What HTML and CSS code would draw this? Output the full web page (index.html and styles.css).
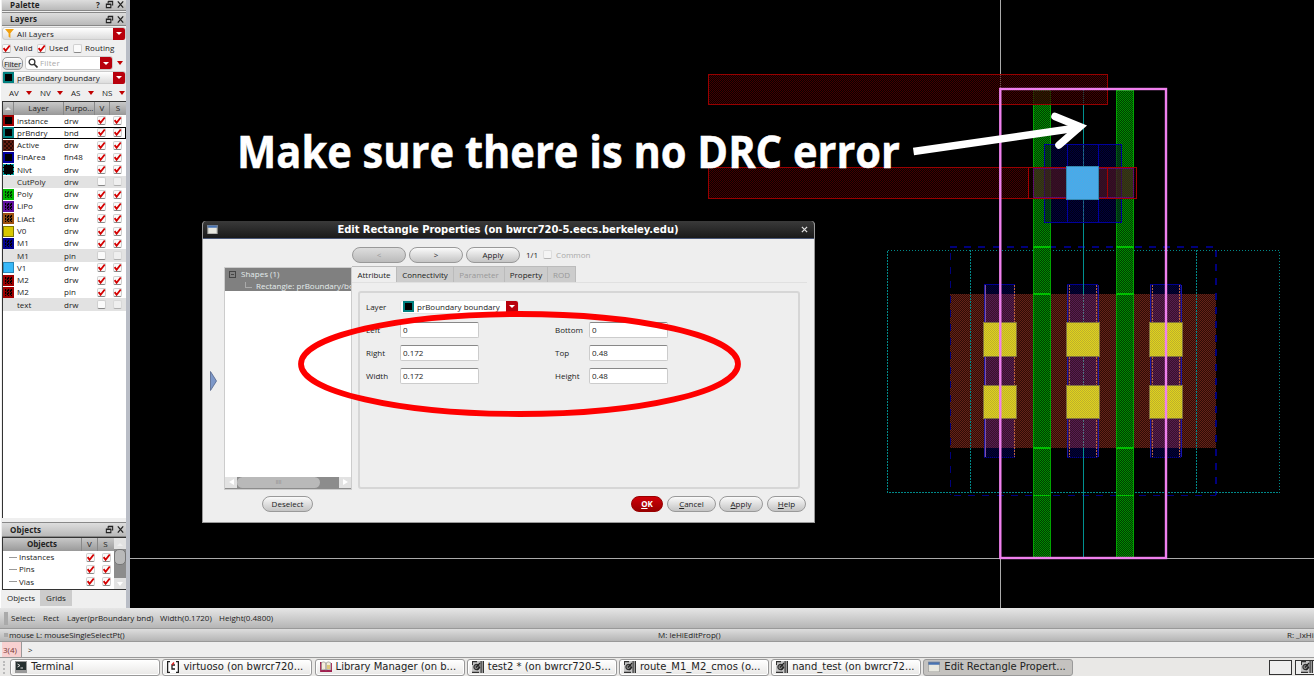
FILE: index.html
```html
<!DOCTYPE html>
<html lang="en">
<head>
<meta charset="utf-8">
<title>Layout Editor</title>
<link rel="stylesheet" href="styles.css">
</head>
<body>
<svg class="defs" width="0" height="0">
  <symbol id="tick" viewBox="0 0 10 10"><path d="M1.8 4.6 4 7.6 8.6 1.6" fill="none" stroke="#d40000" stroke-width="2"/></symbol>
  <symbol id="float" viewBox="0 0 10 10"><path d="M3.5 1.5h5v4h-1M3.5 1.5v2M3 2h6M1.5 4.5h5v4h-5zM1.5 5h5" fill="none" stroke="#222" stroke-width="1.2"/></symbol>
  <symbol id="close" viewBox="0 0 10 10"><path d="M2 1.5 8 8.5M8 1.5 2 8.5" fill="none" stroke="#222" stroke-width="1.4"/></symbol>
  <symbol id="win" viewBox="0 0 11 10"><path d="M0 0h11v10H0z" fill="#e8e8e0"/><path d="M0 0h11v3H0z" fill="#4773b3"/><path d="M.5.5h10v9H.5z" fill="none" stroke="#888" stroke-width=".6"/></symbol>
  <symbol id="chip" viewBox="0 0 12 12"><path d="M0 0h12v12H0z" fill="#c4c4c4"/><path d="M8.500 0h1.200v12H8.500zM10.700 0H12v12h-1.300zM0 10.800h7V12H0zM0 0h5v1.200H0zM0 0h1v4H0z" fill="#333"/><circle cx="4.500" cy="6" r="2.600" fill="#888" stroke="#333" stroke-width="1.200"/><path d="M4 6.500 8 2M5 9l3-3" stroke="#222" stroke-width="1.200"/></symbol>
</svg>
<div class="screen">
  <div class="main">
    <aside class="side">
      <div class="bar pal"><b>Palette</b><span class="q">?</span><svg class="bi"><use href="#float"/></svg><svg class="bi"><use href="#close"/></svg></div>
      <div class="bar lay"><b>Layers</b><svg class="bi"><use href="#float"/></svg><svg class="bi"><use href="#close"/></svg></div>
      <div class="combo all"><svg class="funnel" viewBox="0 0 10 10"><path d="M0 0h10L6 4.800V10L4 8.500V4.800z" fill="#f0a010"/></svg><span>All Layers</span><i class="drop"></i></div>
      <div class="checks"><i class="cb"><svg><use href="#tick"/></svg></i><span class="c1">Valid</span><i class="cb"><svg><use href="#tick"/></svg></i><span class="c2">Used</span><i class="cb"></i><span>Routing</span></div>
      <div class="filter"><span class="fbtn">Filter</span><div class="fin"><svg viewBox="0 0 10 10"><circle cx="4" cy="4" r="2.900" fill="none" stroke="#333" stroke-width="1.300"/><path d="M6 6 9.500 9.500" stroke="#333" stroke-width="1.700"/></svg><em>Filter</em><i class="drop"></i></div><i class="rtri"></i></div>
      <div class="combo cur"><i class="sw bnd"></i><span>prBoundary boundary</span><i class="drop"></i></div>
      <div class="vis"><span>AV</span><i class="rtri"></i><span>NV</span><i class="rtri"></i><span>AS</span><i class="rtri"></i><span>NS</span><i class="rtri"></i></div>
      <div class="table">
        <div class="thead"><i class="up"></i><span class="h1">Layer</span><span class="h2">Purpo...</span><span class="h3">V</span><span class="h4">S</span></div>
        <div class="row"><i class="sw inst"></i><span>instance</span><span>drw</span><i class="cb"><svg><use href="#tick"/></svg></i><i class="cb"><svg><use href="#tick"/></svg></i></div>
        <div class="row sel"><i class="sw bnd"></i><span>prBndry</span><span>bnd</span><i class="cb"><svg><use href="#tick"/></svg></i><i class="cb"><svg><use href="#tick"/></svg></i></div>
        <div class="row"><i class="sw act"></i><span>Active</span><span>drw</span><i class="cb"><svg><use href="#tick"/></svg></i><i class="cb"><svg><use href="#tick"/></svg></i></div>
        <div class="row"><i class="sw fin-a"></i><span>FinArea</span><span>fin48</span><i class="cb"><svg><use href="#tick"/></svg></i><i class="cb"><svg><use href="#tick"/></svg></i></div>
        <div class="row"><i class="sw nlvt"></i><span>Nlvt</span><span>drw</span><i class="cb"><svg><use href="#tick"/></svg></i><i class="cb"><svg><use href="#tick"/></svg></i></div>
        <div class="row off"><i class="sw none"></i><span>CutPoly</span><span>drw</span><i class="cb"></i><i class="cb dim"></i></div>
        <div class="row"><i class="sw poly"></i><span>Poly</span><span>drw</span><i class="cb"><svg><use href="#tick"/></svg></i><i class="cb"><svg><use href="#tick"/></svg></i></div>
        <div class="row"><i class="sw lipo"></i><span>LiPo</span><span>drw</span><i class="cb"><svg><use href="#tick"/></svg></i><i class="cb"><svg><use href="#tick"/></svg></i></div>
        <div class="row"><i class="sw liact"></i><span>LiAct</span><span>drw</span><i class="cb"><svg><use href="#tick"/></svg></i><i class="cb"><svg><use href="#tick"/></svg></i></div>
        <div class="row"><i class="sw v0"></i><span>V0</span><span>drw</span><i class="cb"><svg><use href="#tick"/></svg></i><i class="cb"><svg><use href="#tick"/></svg></i></div>
        <div class="row"><i class="sw m1"></i><span>M1</span><span>drw</span><i class="cb"><svg><use href="#tick"/></svg></i><i class="cb"><svg><use href="#tick"/></svg></i></div>
        <div class="row off"><i class="sw none"></i><span>M1</span><span>pin</span><i class="cb"></i><i class="cb dim"></i></div>
        <div class="row"><i class="sw v1"></i><span>V1</span><span>drw</span><i class="cb"><svg><use href="#tick"/></svg></i><i class="cb"><svg><use href="#tick"/></svg></i></div>
        <div class="row"><i class="sw m2"></i><span>M2</span><span>drw</span><i class="cb"><svg><use href="#tick"/></svg></i><i class="cb"><svg><use href="#tick"/></svg></i></div>
        <div class="row"><i class="sw m2"></i><span>M2</span><span>pin</span><i class="cb"><svg><use href="#tick"/></svg></i><i class="cb"><svg><use href="#tick"/></svg></i></div>
        <div class="row off"><i class="sw none"></i><span>text</span><span>drw</span><i class="cb"></i><i class="cb dim"></i></div>
      </div>
      <div class="bar obj"><b>Objects</b><svg class="bi"><use href="#float"/></svg><svg class="bi"><use href="#close"/></svg></div>
      <div class="objs">
        <div class="olist">
          <div class="ohead"><b>Objects</b><span>V</span><span>S</span></div>
          <div class="orow"><i class="br"></i><span>Instances</span><i class="cb"><svg><use href="#tick"/></svg></i><i class="cb"><svg><use href="#tick"/></svg></i></div>
          <div class="orow"><i class="br"></i><span>Pins</span><i class="cb"><svg><use href="#tick"/></svg></i><i class="cb"><svg><use href="#tick"/></svg></i></div>
          <div class="orow"><i class="br"></i><span>Vias</span><i class="cb"><svg><use href="#tick"/></svg></i><i class="cb"><svg><use href="#tick"/></svg></i></div>
        </div>
        <div class="vs"><i class="ar aup"></i><i class="trk"></i><i class="ar adn"></i></div>
      </div>
      <div class="stabs"><span class="on">Objects</span><span>Grids</span></div>
    </aside>
    <div class="canvas">
      <svg class="art" viewBox="130 0 1184 608" width="1184" height="608" shape-rendering="crispEdges">
        <defs>
          <pattern id="pr" width="2" height="2" patternUnits="userSpaceOnUse"><path d="M0 0h2v2H0z" fill="#140000" fill-opacity=".5"/><path d="M0 0h1v1H0zM1 1h1v1H1z" fill="#480000" fill-opacity=".9"/></pattern>
          <pattern id="pg" width="2" height="2" patternUnits="userSpaceOnUse"><path d="M0 0h2v2H0z" fill="#003c00"/><path d="M0 0h1v1H0zM1 1h1v1H1z" fill="#008c00"/></pattern>
          <pattern id="pa" width="2" height="2" patternUnits="userSpaceOnUse"><path d="M0 0h2v2H0z" fill="#300b06"/><path d="M0 0h1v1H0zM1 1h1v1H1z" fill="#642318"/></pattern>
          <pattern id="pb" width="2" height="2" patternUnits="userSpaceOnUse"><path d="M0 0h1v1H0zM1 1h1v1H1z" fill="#00003c"/></pattern>
          <pattern id="pp" width="2" height="2" patternUnits="userSpaceOnUse"><path d="M0 0h2v2H0z" fill="#38122a"/><path d="M0 0h1v1H0zM1 1h1v1H1z" fill="#561c50"/></pattern>
          <pattern id="py" width="2" height="2" patternUnits="userSpaceOnUse"><path d="M0 0h2v2H0z" fill="#e0d41c"/><path d="M0 0h1v1H0zM1 1h1v1H1z" fill="#bcae2c"/></pattern>
          <pattern id="pv" width="2" height="2" patternUnits="userSpaceOnUse"><path d="M0 0h2v2H0z" fill="#3cb0f0"/><path d="M0 0h1v1H0zM1 1h1v1H1z" fill="#58a4e0"/></pattern>
        </defs>
        <path d="M1000.500 0V608M130 558.500H1314" stroke="#aaa" fill="none"/>
        <rect x="950" y="294" width="266" height="154" fill="url(#pa)"/>
        <g stroke="#00007c" stroke-width="1.500" stroke-dasharray="7 7.200" fill="none"><path d="M950 247H1216M954 495.500H1216M950.500 253V495M1216 250V495"/></g>
        <g stroke="#008888" fill="none" stroke-dasharray="1.500 1.500"><path d="M887.500 250.500H1279.500V492.500H887.500zM970.500 250V492M1196.500 250V492"/></g>
        <g fill="#00001c" stroke="#000090"><rect x="984.500" y="284.500" width="30" height="173"/><rect x="1067.500" y="284.500" width="30" height="173"/><rect x="1150.500" y="284.500" width="30" height="173"/></g>
        <g fill="url(#pb)"><path d="M985 285h30v173h-30zM1068 285h30v173h-30zM1151 285h30v173h-30z"/></g>
        <g fill="url(#pp)"><path d="M985 294h30v154h-30zM1068 294h30v154h-30zM1151 294h30v154h-30z"/></g>
        <path d="M1014.500 285V457M1069.500 285V457M1096.500 285V457M1152.500 285V457M1179.500 285V457" stroke="#bc633e" stroke-dasharray="2 1"/>
        <path d="M985.500 285V457" stroke="#8050a0"/>
        <path d="M984.500 285V457M1067.500 285V457M1098.500 285V457M1150.500 285V457M1181.500 285V457" stroke="#1c18a4"/>
        <path d="M1083.500 90V294M1083.500 448V558" stroke="#009090"/>
        <path d="M1083.500 294V448" stroke="#507080" stroke-dasharray="2 1"/>
        <g fill="url(#pg)" stroke="#00a400"><rect x="1033" y="90" width="17.500" height="468"/><rect x="1116" y="90" width="17.500" height="468"/></g>
        <path d="M1033 247H1051M1116 247H1134M1033 294H1051M1116 294H1134M1033 448H1051M1116 448H1134M1033 495.500H1051M1116 495.500H1134" stroke="#00c000" stroke-width="1.500"/>
        <g fill="url(#pr)" stroke="#980000"><rect x="708.500" y="74.500" width="399" height="30"/><rect x="708.500" y="167.500" width="320" height="31"/></g>
        <g fill="#00002c" fill-opacity=".45" stroke="#00009c"><rect x="1044.500" y="144.500" width="77" height="78"/></g>
        <rect x="1051" y="145" width="65" height="77" fill="url(#pb)"/>
        <path d="M1067.500 145V222M1098.500 145V222" stroke="#0000a0"/>
        <path d="M1083.500 145V222" stroke="#206090" stroke-dasharray="3 1"/>
        <rect x="1033" y="168.500" width="100" height="29" fill="#702c40" fill-opacity=".45" stroke="#6a109a"/>
        <g fill="url(#pr)" fill-opacity=".4" stroke="#a40000"><rect x="1028.500" y="167.500" width="108" height="31"/><path d="M1107.500 168V198"/></g>
        <rect x="1066.500" y="166.500" width="32" height="33" fill="url(#pv)" stroke="#3487b0" stroke-width="1"/>
        <g fill="url(#py)" stroke="#81713d"><rect x="983.500" y="322.500" width="33" height="34"/><rect x="1066.500" y="322.500" width="33" height="34"/><rect x="1149.500" y="322.500" width="33" height="34"/><rect x="983.500" y="385.500" width="33" height="33"/><rect x="1066.500" y="385.500" width="33" height="33"/><rect x="1149.500" y="385.500" width="33" height="33"/></g>
        <rect x="1000.300" y="89" width="165.700" height="469" fill="none" stroke="#f080ee" stroke-width="2.400" shape-rendering="auto"/>
      </svg>
      <section class="dialog">
        <header class="dtitle"><svg class="wicon"><use href="#win"/></svg><h1>Edit Rectangle Properties (on bwrcr720-5.eecs.berkeley.edu)</h1><svg class="dx" viewBox="0 0 8 8"><path d="M1 1l6 6M7 1 1 7" stroke="#ddd" stroke-width="1.500"/></svg></header>
        <div class="dbody">
          <div class="dnav"><button class="dis">&lt;</button><button>&gt;</button><button>Apply</button><span>1/1</span><i class="cb dim"></i><span class="gray">Common</span></div>
          <div class="dmid">
            <svg class="expand" viewBox="0 0 7 20"><path d="M.500.500 6.500 10 .500 19.500z" fill="#7d98c9" stroke="#53658c" stroke-width=".8"/></svg>
            <div class="tree">
              <div class="tsel"><p><i class="minus"></i>Shapes (1)</p><p class="kid"><i class="elbow"></i>Rectangle: prBoundary/bo</p></div>
              <div class="hs"><i class="ar alf"></i><i class="hthumb">IIII</i><i class="htrk"></i><i class="ar art2"></i></div>
            </div>
            <div class="props">
              <nav class="tabs"><span class="on t1">Attribute</span><span class="t2">Connectivity</span><span class="t3 gray">Parameter</span><span class="t4">Property</span><span class="t5 gray">ROD</span></nav>
              <div class="pane">
                <div class="lrow"><label>Layer</label><div class="combo dl"><i class="sw bnd"></i><span>prBoundary boundary</span><i class="drop"></i></div></div>
                <div class="fields">
                  <label>Left</label><div class="inp">0</div><label>Bottom</label><div class="inp">0</div>
                  <label>Right</label><div class="inp">0.172</div><label>Top</label><div class="inp">0.48</div>
                  <label>Width</label><div class="inp">0.172</div><label>Height</label><div class="inp">0.48</div>
                </div>
              </div>
            </div>
          </div>
          <div class="dfoot"><button class="desel">Deselect</button><button class="ok"><u>O</u>K</button><button class="can"><u>C</u>ancel</button><button class="app"><u>A</u>pply</button><button class="hlp"><u>H</u>elp</button></div>
        </div>
      </section>
    </div>
  </div>
  <div class="status"><i></i><span class="s1">Select:</span><span class="s2">Rect</span><span class="s3">Layer(prBoundary bnd)</span><span class="s4">Width(0.1720)</span><span>Height(0.4800)</span></div>
  <div class="mouse"><i></i><span class="ml">mouse L: mouseSingleSelectPt()</span><span class="mm">M: leHiEditProp()</span><span class="mr">R: _lxHi</span></div>
  <div class="cmd"><span class="n">3(4)</span><span>&gt;</span></div>
  <footer class="task">
    <i class="grip"></i>
    <div class="tb"><svg viewBox="0 0 12 12"><path d="M0 0h12v12H0z" fill="#999"/><path d="M1 1h10v8H1z" fill="#263030"/><path d="M2.500 3 5 4.500 2.500 6M5.500 7H8" stroke="#ddd" fill="none"/></svg><span>Terminal</span></div>
    <div class="tb"><svg viewBox="0 0 12 12"><path d="M0 0h12v12H0z" fill="#fff"/><path d="M3 .6H.6v10.800H3M9 .6h2.400v10.800H9M8 4H5v4h3" stroke="#222" stroke-width="1.300" fill="none"/><path d="M7 1.500 5 4" stroke="#d22" stroke-width="1.500"/></svg><span>virtuoso (on bwrcr720...</span></div>
    <div class="tb"><svg viewBox="0 0 12 12"><path d="M0 2h1v8h11V2" fill="none" stroke="#a02050" stroke-width="1.800"/><path d="M1.500 1.500Q4 0 6 2V9Q4 7.500 1.500 9zM6 2q2-2 4.500-.5V9Q8 7.500 6 9z" fill="#f4eddb" stroke="#888" stroke-width=".6"/><path d="M7 4h3v4H7z" fill="#ddc87a"/></svg><span>Library Manager (on b...</span></div>
    <div class="tb"><svg><use href="#chip"/></svg><span>test2 * (on bwrcr720-5...</span></div>
    <div class="tb"><svg><use href="#chip"/></svg><span>route_M1_M2_cmos (o...</span></div>
    <div class="tb"><svg><use href="#chip"/></svg><span>nand_test (on bwrcr72...</span></div>
    <div class="tb active"><svg viewBox="0 0 11 10"><use href="#win"/></svg><span>Edit Rectangle Propert...</span></div>
    <div class="pager"><i></i><i><svg><use href="#chip"/></svg></i></div>
  </footer>
  <svg class="notes" viewBox="0 0 1314 677" width="1314" height="677">
    <text class="msg" x="237" y="168" textLength="663" lengthAdjust="spacingAndGlyphs">Make sure there is no DRC error</text>
    <path d="M913.500 151.500 1080 127.500" stroke="#fff" stroke-width="7.500" fill="none"/>
    <path d="M1055 116.500 1080 126.700 1059 145" stroke="#fff" stroke-width="7.500" stroke-linecap="round" stroke-miterlimit="10" fill="none"/>
    <ellipse cx="519.500" cy="364" rx="218.500" ry="50" fill="none" stroke="#fe0000" stroke-width="5.800"/>
  </svg>
</div>
</body>
</html>
```

FILE: styles.css
```css
* { box-sizing: border-box; }
body { margin: 0; font: 8px/12px "Open Sans", "Noto Sans", sans-serif; color: #222; background: #fff; }
i, em { font-style: normal; }
p, h1 { margin: 0; }
.defs { position: absolute; }
.screen { position: relative; width: 1314px; height: 677px; overflow: hidden; display: flex; flex-direction: column; }
.main { display: flex; height: 608px; flex: none; }
.side { width: 130px; height: 608px; padding-left: 2px; padding-right: 4px; background: #efefef; box-shadow: inset -4px 0 #b9bdc6, inset 1px 0 #fff; display: flex; flex-direction: column; overflow: hidden; flex: none; white-space: nowrap; }
.bar { display: flex; align-items: center; height: 14px; padding-left: 8px; background: linear-gradient(#ddd, #b9b9b9); border: 1px solid #888; border-left: 0; border-right: 0; flex: none; }
.bar b { flex: 1; font-weight: 700; letter-spacing: .15px; }
.bi { width: 9px; height: 9px; margin-right: 1px; margin-left: 1px; }
.q { font-weight: 700; width: 8px; }
.bar.pal { height: 11px; border-top: 0; line-height: 9px; padding-bottom: 1px; }
.bar.lay { margin-top: 1px; height: 14px; }
.combo { display: flex; align-items: center; height: 13px; background: linear-gradient(#fff, #dcdcdc); border: 1px solid #ccc; border-radius: 3px; flex: none; }
.combo span { flex: 1; }
.drop { width: 12px; height: 12px; background: #b8000c; border-radius: 0 2px 2px 0; display: flex; align-items: center; justify-content: center; flex: none; }
.drop::after { content: ""; border: 3px solid transparent; border-top: 3px solid #fff; border-bottom: 0; }
.all { margin-top: 1px; }
.all span { letter-spacing: .15px; }
.funnel { width: 9px; height: 9px; margin: 0 3px 0 2px; }
.checks { display: flex; align-items: center; height: 16px; flex: none; letter-spacing: .1px; }
.cb { width: 9px; height: 9px; border: 1px solid #d0d0d0; border-bottom-color: #888; border-radius: 2px; background: #fafafa; display: block; flex: none; }
.cb svg { display: block; width: 9px; height: 9px; margin: -1px; }
.cb.dim { opacity: .55; }
.checks .cb + span { margin-left: 3px; }
.checks .c1 { width: 23px; } .checks .c2 { width: 24px; }
.filter { display: flex; align-items: center; height: 14px; flex: none; }
.fbtn { border: 1px solid #999; border-radius: 5px; background: linear-gradient(#fff, #ccc); height: 13px; width: 21px; line-height: 11px; text-align: center; margin-right: 2px; letter-spacing: -.3px; flex: none; }
.fin { display: flex; align-items: center; height: 14px; width: 88px; border: 1px solid #ccc; background: #fff; border-radius: 3px; padding-left: 2px; flex: none; }
.fin svg { width: 10px; height: 10px; }
.fin em { flex: 1; color: #aaa; padding-left: 2px; letter-spacing: .2px; }
.rtri { border: 3px solid transparent; border-top: 4px solid #c00000; border-bottom: 0; margin-left: 4px; width: 0; flex: none; }
.sw { width: 11px; height: 11px; border: 2px solid #000; background-color: #000; flex: none; display: block; }
.cur { margin-top: 1px; }
.cur .sw { margin-right: 3px; }
.sw.bnd { border-color: #008080; }
.inst { border-color: #a00000; }
.act { background: repeating-conic-gradient(#601c10 0 25%, #280a04 0 50%) 0 0/4px 4px; border: 1px solid #551a10; }
.fin-a { border-color: #0000a0; }
.nlvt { border: 1px dashed #00a0a0; }
.poly { border-color: #00b800; background: repeating-conic-gradient(#00a000 0 25%, #003000 0 50%) 0 0/3px 3px; }
.lipo { border-color: #6010a0; background: repeating-conic-gradient(#500a80 0 25%, #000 0 50%) 0 0/3px 3px; }
.liact { border-color: #9c5010; background: repeating-conic-gradient(#7a3c10 0 25%, #000 0 50%) 0 0/3px 3px; }
.v0 { background: #d8c800; border: 1px solid #807800; }
.m1 { border-color: #000090; background: repeating-conic-gradient(#000080 0 25%, #000 0 50%) 0 0/3px 3px; }
.v1 { background: #38b8f8; border: 1px solid #2888b8; }
.m2 { border-color: #a00000; background: repeating-conic-gradient(#800000 0 25%, #000 0 50%) 0 0/3px 3px; }
.sw.none { visibility: hidden; }
.vis { display: flex; align-items: center; height: 15px; padding-left: 7px; margin-top: 1px; flex: none; }
.vis span { width: 12px; flex: none; }
.vis .rtri { margin: 0 8px 0 5px; }
.table { background: #fff; border: 1px solid #333; border-right: 0; border-bottom: 0; height: 417px; margin-top: 1px; flex: none; }
.thead { display: flex; height: 12.500px; line-height: 11px; background: linear-gradient(#c8c8c8, #999); text-align: center; }
.thead > * + * { border-left: 1px solid #888; }
.up { width: 10px; font-size: 0; }
.up::after, .aup::after { content: ""; display: inline-block; border: 3px solid transparent; border-bottom: 3px solid #eee; border-top: 0; margin-top: 5px; }
.h1 { width: 50px; } .h2 { width: 31px; text-align: left; padding-left: 1px; letter-spacing: -.1px; } .h3 { width: 15px; } .h4 { flex: 1; }
.row { height: 12.280px; display: grid; grid-template-columns: 14px 47px 33px 16px 12px; align-items: center; line-height: 12px; }
.row.off { background: #e2e2e2; }
.row.sel { box-shadow: inset 0 0 0 1px #000; }
.obj { margin-top: 4px; height: 15px; }
.objs { display: flex; height: 53px; border: 1px solid #333; border-right: 0; background: #fff; flex: none; }
.olist { width: 111px; }
.ohead { display: flex; height: 13px; background: linear-gradient(#c8c8c8, #999); text-align: center; }
.ohead b { width: 78px; } .ohead span { width: 16px; border-left: 1px solid #888; }
.orow { display: grid; height: 12.300px; align-items: center; grid-template-columns: 16px 67px 16px 10px; }
.br { width: 7px; height: 1px; background: #999; margin-left: 7px; box-shadow: -1px 0 #999; }
.vs { flex: 1; display: flex; flex-direction: column; background: #8c8c8c; }
.ar { background: #e2e2e2; height: 11px; text-align: center; font-size: 0; display: block; }
.adn::after { content: ""; display: inline-block; border: 3px solid transparent; border-top: 4px solid #fff; border-bottom: 0; margin-top: 4px; }
.trk { flex: 1; }
.trk::after { content: ""; display: block; height: 14px; border-radius: 5px; background: #b9b9b9; border: 1px solid #777; }
.stabs { display: flex; height: 17px; line-height: 16px; }
.stabs span { width: 38px; text-align: center; background: #efefef; }
.stabs span:last-child { background: #ccc; width: 32px; height: 16px; }
.canvas { position: relative; width: 1184px; background: #000; }
.art { display: block; }
.dialog { position: absolute; left: 72px; top: 221px; width: 613px; height: 302px; background: #eee; border: 1px solid #999; border-top: 0; border-radius: 4px 4px 0 0; overflow: hidden; }
.dtitle { height: 18px; background: linear-gradient(#3a3a3a, #1a1a1a); border-bottom: 1px solid #4a5878; display: flex; align-items: center; padding: 0 6px 0 4px; }
.wicon { width: 11px; height: 9px; }
h1 { flex: 1; text-align: center; color: #fff; font: 700 10px/17px "DejaVu Sans", sans-serif; letter-spacing: -.06px; padding-right: 3px; white-space: nowrap; }
.dx { width: 7px; height: 7px; }
.dbody { display: flex; flex-direction: column; }
.dnav { display: flex; align-items: center; height: 17px; margin-top: 7px; padding-left: 149px; }
button { font: 8px/12px "Open Sans", sans-serif; color: #222; height: 16px; padding: 0; border: 1px solid #999; border-radius: 8px; background: linear-gradient(#fafafa, #c4c4c4); }
.dnav button { width: 54px; margin-right: 3px; }
.dnav .dis { background: linear-gradient(#ddd, #bbb); color: #999; }
.dnav span:first-of-type { margin: 0 5px 0 3px; }
.dnav .gray { margin-left: 4px; }
.gray { color: #aaa; }
.dmid { display: flex; height: 225px; margin-top: 3px; }
.expand { width: 7px; height: 20px; margin: 105px 7px 0 7px; }
.tree { width: 128px; margin-top: 1px; height: 223px; background: #fff; border: 1px solid #ccc; display: flex; flex-direction: column; justify-content: space-between; }
.tsel { height: 23px; background: #808080; color: #e4ecec; overflow: hidden; white-space: nowrap; line-height: 12px; }
.tsel p { display: flex; align-items: center; height: 12px; }
.minus { width: 7px; height: 7px; border: 1px solid #444; margin: 0 5px 0 4px; background: linear-gradient(#444, #444) center/3px 1px no-repeat; }
.elbow { width: 7px; height: 6px; border: 1px solid #aaa; border-width: 0 0 1px 1px; margin: 0 4px 2px 20px; flex: none; }
.hs { display: flex; height: 12px; background: #8c8c8c; }
.hs .ar { width: 12px; height: 11px; }
.alf::after, .art2::after { content: ""; display: inline-block; border: 3px solid transparent; border-right: 5px solid #fff; border-left: 0; margin-top: 2px; }
.art2::after { border-left: 5px solid #fff; border-right: 0; }
.hthumb { width: 83px; height: 11px; background: #b9b9b9; border-radius: 6px; text-align: center; font-size: 5px; color: #888; line-height: 11px; }
.htrk { flex: 1; }
.props { width: 455px; }
.tabs { display: flex; height: 17px; border-bottom: 1px solid #e0e0e0; line-height: 16px; text-align: center; }
.tabs span { background: #ccc; border: 1px solid #bbb; border-left: 0; border-bottom: 0; height: 16px; }
.tabs .on { background: #eee; }
.t1 { width: 45px; } .t2 { width: 57px; } .t3 { width: 51px; } .t4 { width: 43px; } .t5 { width: 28px; }
.tabs .gray { color: #999; }
.pane { border: 2px solid #d6d6d6; border-radius: 3px; width: 442px; height: 198px; margin: 8px 0 0 6px; padding: 6px 0 0 6px; }
.lrow { display: flex; align-items: center; height: 15px; }
.lrow label { width: 34px; }
.combo.dl { width: 119px; background: #fff; padding-left: 2px; border-color: #e4e4e4; height: 14px; }
.dl .sw { margin-right: 3px; }
.fields { display: grid; grid-template-columns: 34px 155px 34px 80px; grid-auto-rows: 23.200px; align-items: center; margin-top: 4px; }
.inp { width: 79px; height: 16px; background: #fff; border: 1px solid #ccc; border-top: 1px solid #888; line-height: 14px; padding-left: 2px; border-radius: 2px; }
.dfoot { display: flex; margin-top: 5px; padding-left: 59px; }
.desel { width: 51px; margin-right: 318px; }
.dfoot .ok { width: 32px; background: linear-gradient(#d00008, #980000); color: #fff; font-weight: 700; border-color: #900; margin-right: 4px; }
.can { width: 49px; margin-right: 3px; } .app { width: 44px; margin-right: 4px; } .hlp { width: 39px; }
.status { height: 21px; background: linear-gradient(#e6e6e6, #b5b5b5); border-bottom: 1px solid #999; display: flex; align-items: center; padding-left: 4px; white-space: nowrap; flex: none; }
.status i { width: 4px; height: 13px; background: #aaa; margin-right: 3px; }
.s1 { width: 32px; } .s2 { width: 24px; } .s3 { width: 93px; } .s4 { width: 59px; }
.mouse { height: 13px; background: linear-gradient(#ddd, #b5b5b5); border-bottom: 1px solid #999; display: flex; align-items: center; padding-left: 4px; white-space: nowrap; flex: none; }
.mouse i { width: 4px; height: 4px; background: #aaa; margin-right: 1px; }
.ml { width: 649px; letter-spacing: -.08px; } .mm { width: 629px; }
.cmd { height: 15px; background: #eee; display: flex; align-items: center; padding-left: 2px; flex: none; }
.cmd .n { background: #f8d0d0; border-right: 1px solid #999; height: 15px; line-height: 15px; width: 20px; margin-right: 6px; padding-left: 1px; color: #733; }
.task { height: 20px; background: #e9e8e6; border-top: 1px solid #999; border-bottom: 1px solid #fff; display: flex; align-items: center; gap: 2.200px; padding-left: 3px; font: 10px/14px "DejaVu Sans", sans-serif; white-space: nowrap; flex: none; }
.grip { width: 5px; height: 13px; border-left: 2px dotted #bbb; flex: none; }
.tb { width: 150px; height: 17px; flex: none; border: 1px solid #999; border-radius: 3px; background: linear-gradient(#fff, #e9e8e6); display: flex; align-items: center; padding-left: 4px; box-shadow: inset 0 0 0 1px #fff; }
.tb svg { width: 12px; height: 12px; margin-right: 4px; flex: none; }
.tb.active { background: #c4c2bf; box-shadow: none; }
.pager { display: flex; gap: 3px; margin-left: 193px; flex: none; }
.pager i { width: 23px; height: 15px; border: 1.500px solid #333; background: #eee; flex: none; }
.pager svg { width: 12px; height: 12px; margin-left: 5px; display: block; }
.notes { position: absolute; left: 0; top: 0; pointer-events: none; }
.msg { font: 700 44.500px "Open Sans", sans-serif; fill: #fff; stroke: #fff; stroke-width: .5px; }
```
